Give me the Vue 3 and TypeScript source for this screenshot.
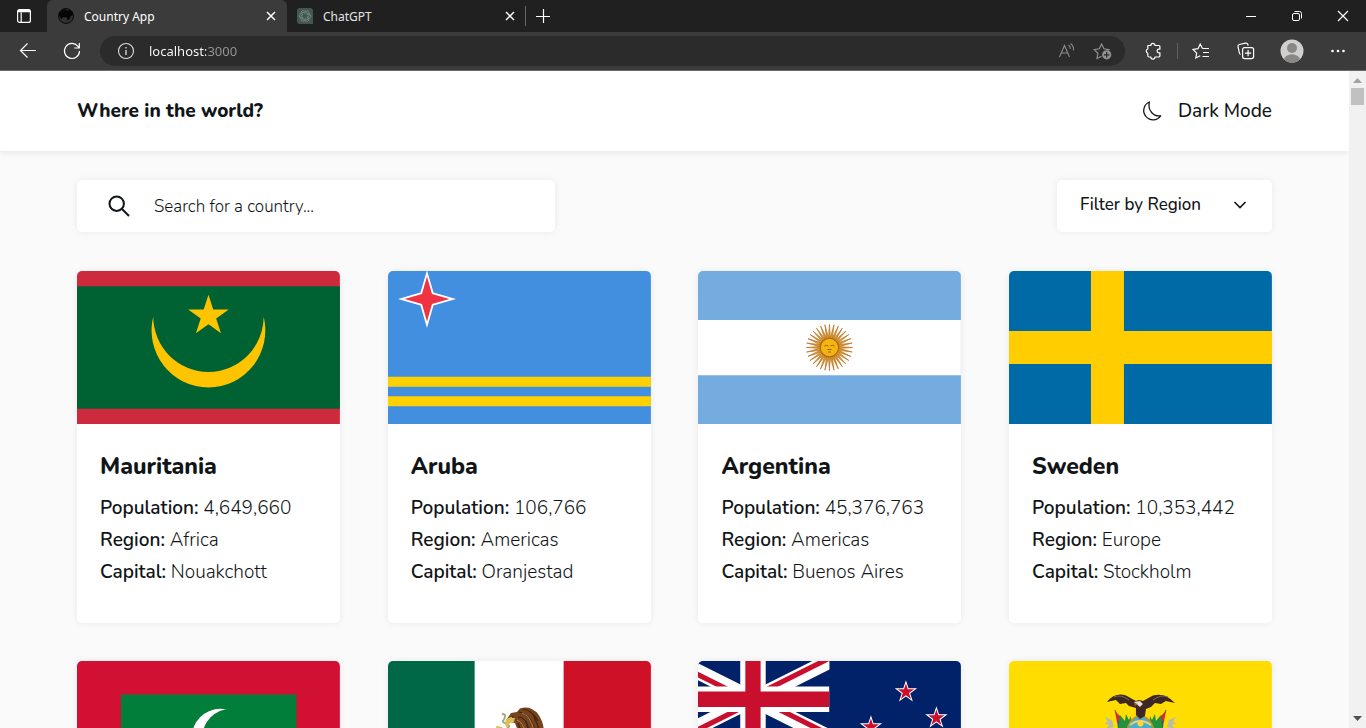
<script setup lang="ts">
import { computed, ref } from 'vue'

interface Country {
  name: string
  population: string
  region: string
  capital: string
}

const countries: Country[] = [
  { name: 'Mauritania', population: '4,649,660', region: 'Africa', capital: 'Nouakchott' },
  { name: 'Aruba', population: '106,766', region: 'Americas', capital: 'Oranjestad' },
  { name: 'Argentina', population: '45,376,763', region: 'Americas', capital: 'Buenos Aires' },
  { name: 'Sweden', population: '10,353,442', region: 'Europe', capital: 'Stockholm' },
  { name: 'Maldives', population: '540,542', region: 'Asia', capital: 'Malé' },
  { name: 'Mexico', population: '128,932,753', region: 'Americas', capital: 'Mexico City' },
  { name: 'New Zealand', population: '5,084,300', region: 'Oceania', capital: 'Wellington' },
  { name: 'Ecuador', population: '17,643,060', region: 'Americas', capital: 'Quito' },
]

const regions = ['Africa', 'Americas', 'Asia', 'Europe', 'Oceania']
const address = ref('localhost:3000')
const query = ref('')
const region = ref('')

const shown = computed(() =>
  countries.filter(
    (c) =>
      (!region.value || c.region === region.value) &&
      c.name.toLowerCase().includes(query.value.toLowerCase()),
  ),
)

function star(cx: number, cy: number, r: number): string {
  const pts: string[] = []
  for (let i = 0; i < 10; i++) {
    const radius = i % 2 ? r * 0.382 : r
    const a = (i * Math.PI) / 5 - Math.PI / 2
    pts.push(`${(cx + radius * Math.cos(a)).toFixed(2)},${(cy + radius * Math.sin(a)).toFixed(2)}`)
  }
  return pts.join(' ')
}

const nzStars = [
  [208, 31],
  [238.5, 57],
  [173, 66],
  [208, 121],
]
</script>

<template>
  <div class="window">
    <header class="chrome">
      <div class="titlebar">
        <button class="tab-menu" aria-label="Tab actions">
          <svg width="16" height="16" viewBox="0 0 16 16" fill="none" stroke="#fff" stroke-width="1.2">
            <rect x="1.6" y="1.6" width="12.8" height="12.8" rx="2" />
            <path d="M2 3.6h12M5.2 4.5v10" />
            <path d="M2 2.6h12" stroke-width="1.8" />
          </svg>
        </button>
        <div class="tab active">
          <svg class="favicon" width="16" height="16" viewBox="0 0 16 16">
            <circle cx="8" cy="8" r="7.5" fill="#303030" stroke="#0c0c0c" />
            <path d="M1 6Q2.500 1.500 7 1L9 2.500 12 2Q15 4.500 15 7L12.500 8.500 11.500 11 9.800 12.500 9 9.500 5.500 9 3.500 11Q1 9.500 1 6Z" fill="#050505" />
          </svg>
          <span class="tab-title">Country App</span>
          <button class="tab-close" aria-label="Close Country App">
            <svg width="10" height="10" viewBox="0 0 10 10" stroke="#fff" stroke-width="1.5"><path d="M1 1l8 8M9 1l-8 8" /></svg>
          </button>
        </div>
        <div class="tab">
          <svg class="favicon" width="16" height="16" viewBox="0 0 16 16">
            <path d="M3 0h10a3 3 0 0 1 3 3v13H3a3 3 0 0 1-3-3V3a3 3 0 0 1 3-3Z" fill="#41584f" />
            <g fill="none" stroke="#7c8a84" stroke-width=".8">
              <path v-for="n in 6" :key="n" d="M8 5.600V4.600Q8 2.600 9.800 2.600Q12 2.700 12 5V8.200L10.200 9.200" :transform="`rotate(${n * 60} 8 8)`" />
            </g>
          </svg>
          <span class="tab-title">ChatGPT</span>
          <button class="tab-close" aria-label="Close ChatGPT">
            <svg width="10" height="10" viewBox="0 0 10 10" stroke="#fff" stroke-width="1.5"><path d="M1 1l8 8M9 1l-8 8" /></svg>
          </button>
        </div>
        <span class="tab-divider"></span>
        <button class="new-tab" aria-label="New tab">
          <svg width="14" height="14" viewBox="0 0 14 14" stroke="#fff" stroke-width="1.2"><path d="M0 7.500h14M7.500 0v14" /></svg>
        </button>
        <div class="window-buttons">
          <button aria-label="Minimize">
            <svg width="12" height="12" viewBox="0 0 12 12" stroke="#fff"><path d="M1 6.500h10" /></svg>
          </button>
          <button aria-label="Restore">
            <svg width="12" height="12" viewBox="0 0 12 12" fill="none" stroke="#fff"><rect x="1.5" y="3.5" width="7" height="7" rx="1.5" /><path d="M3.500 1.500h5a2 2 0 0 1 2 2v5" /></svg>
          </button>
          <button aria-label="Close">
            <svg width="12" height="12" viewBox="0 0 12 12" stroke="#fff" stroke-width="1.2"><path d="M1 1l10 10M11 1L1 11" /></svg>
          </button>
        </div>
      </div>

      <div class="toolbar">
        <button class="nav" aria-label="Back">
          <svg width="18" height="18" viewBox="0 0 18 18" fill="none" stroke="#fff" stroke-width="1.2"><path d="M17 8.500H1.500M8.500 1.500l-7 7 7 7" /></svg>
        </button>
        <button class="nav" aria-label="Refresh">
          <svg width="18" height="18" viewBox="0 0 18 18" fill="none" stroke="#fff" stroke-width="1.2"><path d="M16.500 9A7.500 7.500 0 1 1 14.800 4.200L16 5.600M16.300 1v5h-5" /></svg>
        </button>
        <div class="address">
          <button class="icon" aria-label="Site information">
            <svg width="18" height="18" viewBox="0 0 18 18" fill="none" stroke="#ddd" stroke-width="1.1"><circle cx="9" cy="9" r="7.5" /><path d="M9 8v5M9 5v1.500" stroke-width="1.3" /></svg>
          </button>
          <input v-model="address" class="url" type="text" aria-label="Address" />
          <button class="icon" aria-label="Read aloud">
            <svg width="18" height="18" viewBox="0 0 18 18" fill="none" stroke="#8b8b8b" stroke-width="1.1"><path d="M2.500 15L7.500 3.500l5 11.500M4.200 11h6.600M11.500 3q2 1.500 1.800 4M13.500 1.500q3.500 2.500 3 7" /></svg>
          </button>
          <button class="icon" aria-label="Add to favorites">
            <svg width="19" height="18" viewBox="0 0 19 18" fill="none" stroke="#929292" stroke-width="1.2">
              <path d="M8.500 14.200L4 16.500l.9-5.200L1.200 7.600l5.100-.8L8.600 2 11 6.800l5 .8-1 1" />
              <circle cx="13.7" cy="12.8" r="4.6" fill="#929292" stroke="none" />
              <path d="M13.700 10v5.600M10.900 12.800h5.600" stroke="#2b2b2b" />
            </svg>
          </button>
        </div>
        <div class="tools">
          <button class="icon extensions" aria-label="Extensions">
            <svg width="18" height="18" viewBox="0 0 18 18" fill="none" stroke="#fff" stroke-width="1.2" stroke-linejoin="round">
              <path d="M3.800 3.500h3a2.100 2.100 0 0 1 4.200 0h3.700a1.200 1.200 0 0 1 1.200 1.200v2.500h-1a1.800 1.800 0 0 0 0 3.600h1v3a1.200 1.200 0 0 1-1.200 1.200H11a2.100 2.100 0 0 1-4.200 0H5a1.200 1.200 0 0 1-1.200-1.200v-2.600a2.200 2.200 0 0 1 0-4.200Z" />
            </svg>
          </button>
          <span class="tool-divider"></span>
          <button class="icon favorites" aria-label="Favorites">
            <svg width="18" height="18" viewBox="0 0 18 18" fill="none" stroke="#fff" stroke-width="1.2">
              <path d="M10.500 6.500L8.200 2 6 6.700l-5 .8 3.700 3.600L3.800 16l4.400-2.300M10.500 6.500H17M11 10.500h6M10.500 14.500H17" />
            </svg>
          </button>
          <button class="icon" aria-label="Collections">
            <svg width="18" height="18" viewBox="0 0 18 18" fill="none" stroke="#fff" stroke-width="1.2">
              <rect x="5.6" y="5.6" width="11" height="11" rx="2" />
              <path d="M11.100 8v6.200M8 11.100h6.200M3.600 12.500Q2.600 12 2.400 11L1 4.600Q.7 3 2.300 2.500L8.600 1.100q1.600-.3 2.200 1.200l.4 1.300" />
            </svg>
          </button>
          <button class="icon" aria-label="Profile">
            <svg width="24" height="24" viewBox="0 0 24 24">
              <defs><clipPath id="avatar"><circle cx="12" cy="12" r="11.5" /></clipPath></defs>
              <g clip-path="url(#avatar)"><rect width="24" height="24" fill="#d2d0ce" /><circle cx="12" cy="9" r="5" fill="#8a8886" /><ellipse cx="12" cy="21" rx="8" ry="5.8" fill="#8a8886" /></g>
            </svg>
          </button>
          <button class="icon" aria-label="Settings and more">
            <svg width="18" height="18" viewBox="0 0 18 18" fill="#fff"><circle cx="3.5" cy="9" r="1.3" /><circle cx="9" cy="9" r="1.3" /><circle cx="14.5" cy="9" r="1.3" /></svg>
          </button>
        </div>
      </div>
    </header>

    <div class="viewport">
      <div class="page">
        <header class="site-header">
          <h1>Where in the world?</h1>
          <button class="theme">
            <svg width="20" height="20" viewBox="0 0 20 20" fill="none" stroke="#111517" stroke-width="1.3" stroke-linejoin="round">
              <path d="M7.300 1A9.300 9.300 0 1 0 18.700 14.800C11.500 16 5.500 9.500 7.300 1Z" />
            </svg>
            Dark Mode
          </button>
        </header>

        <main>
          <div class="filters">
            <label class="search">
              <svg width="22" height="22" viewBox="0 0 22 22" fill="none" stroke="#111517" stroke-width="2">
                <circle cx="8.7" cy="8.7" r="7.2" /><path d="M14 14l7 7" />
              </svg>
              <input v-model="query" type="text" placeholder="Search for a country..." aria-label="Search for a country" />
            </label>
            <div class="region">
              <select v-model="region" aria-label="Filter by Region">
                <option value="">Filter by Region</option>
                <option v-for="r in regions" :key="r" :value="r">{{ r }}</option>
              </select>
              <svg width="14" height="10" viewBox="0 0 14 10" fill="none" stroke="#111517" stroke-width="1.6"><path d="M1.500 2L7 7.500 12.500 2" /></svg>
            </div>
          </div>

          <section class="grid">
            <article v-for="c in shown" :key="c.name" class="card">
              <svg v-if="c.name === 'Mauritania'" class="flag" viewBox="0 0 263 153" preserveAspectRatio="none" role="img" aria-label="Flag of Mauritania">
                <path fill="#cd2a3e" d="M0 0h263v153H0z" />
                <path fill="#006233" d="M0 15.300h263v122.400H0z" />
                <path fill="#ffc400" d="M76.300 45.700A56.900 56.900 0 1 0 186.700 45.700A55.200 55.200 0 0 1 76.300 45.700Z" />
                <polygon fill="#ffc400" :points="star(131.5, 45, 21.3)" />
              </svg>

              <svg v-else-if="c.name === 'Aruba'" class="flag" viewBox="0 0 263 153" preserveAspectRatio="none" role="img" aria-label="Flag of Aruba">
                <path fill="#418fde" d="M0 0h263v153H0z" />
                <path fill="#ffd100" d="M0 105.700h263v10H0zM0 125.200h263v10H0z" />
                <path fill="#fff" d="M39-.8L45.500 21.500 68 28l-22.500 6.500L39 57l-6.500-22.500L10 28l22.500-6.500Z" />
                <path fill="#ef3340" d="M39 5.500L44 23l17.500 5L44 33l-5 17.500L34 33l-17.500-5L34 23Z" />
              </svg>

              <svg v-else-if="c.name === 'Argentina'" class="flag" viewBox="0 0 263 153" preserveAspectRatio="none" role="img" aria-label="Flag of Argentina">
                <path fill="#74acdf" d="M0 0h263v153H0z" />
                <path fill="#fff" d="M0 49h263v55.300H0z" />
                <path v-for="n in 32" :key="n" d="M130.500 67L131.500 53.300 132.500 67Z" fill="#e09a20" stroke="#b9772b" stroke-width=".7" :transform="`rotate(${n * 11.25} 131.5 76.5)`" />
                <circle cx="131.5" cy="76.5" r="9.2" fill="#f6b40e" stroke="#a8661a" stroke-width="1.1" />
                <path d="M126.500 75q2-1.500 4 0M132.500 75q2-1.500 4 0M129.500 78.500h4M130 81h3" stroke="#9a6018" stroke-width="1" fill="none" />
              </svg>

              <svg v-else-if="c.name === 'Sweden'" class="flag" viewBox="0 0 263 153" preserveAspectRatio="none" role="img" aria-label="Flag of Sweden">
                <path fill="#006aa7" d="M0 0h263v153H0z" />
                <path fill="#ffcd00" d="M82 0h33v153H82zM0 60h264v33H0z" />
              </svg>

              <svg v-else-if="c.name === 'Maldives'" class="flag" viewBox="0 0 263 153" preserveAspectRatio="none" role="img" aria-label="Flag of Maldives">
                <path fill="#d21034" d="M0 0h263v153H0z" />
                <path fill="#007e3a" d="M44 33.500h175.500v86H44z" />
                <circle cx="143.5" cy="76.5" r="28.7" fill="#fff" />
                <circle cx="154" cy="76.5" r="28.7" fill="#007e3a" />
              </svg>

              <svg v-else-if="c.name === 'Mexico'" class="flag" viewBox="0 0 263 153" preserveAspectRatio="none" role="img" aria-label="Flag of Mexico">
                <path fill="#006847" d="M0 0h87v153H0z" />
                <path fill="#fff" d="M86.700 0h89.300v153H86.700z" />
                <path fill="#ce1126" d="M175.700 0H263v153h-87.300z" />
                <path d="M114 53q4 0 3 3t-2 4 4 3-1 5" fill="none" stroke="#9eac78" stroke-width="1.8" />
                <path d="M119 58L123 52 129 51 132 47.500Q141 44 149 51.500 155 59 156 69L154 86H126L129 67 127 62 122 61Z" fill="#76431d" />
                <path d="M131 51q6 1 10 6t8 16M130 56q8 0 11 13M135 48q9 1 15 12M130 62l5 13M138 60l4 14M145 53l7 17" fill="none" stroke="#3d2415" stroke-width="1.2" />
                <path d="M134 52q8 2 12 17M129 59q6 2 9 14" fill="none" stroke="#b7824b" stroke-width="1" />
                <path d="M118 58l5-2 4 1-1 4-4 1-3 5-2-4ZM108 65l6 1 3 4-4 3-4-2Z" fill="#dfbc54" />
                <path d="M124 56h2" stroke="#2c1a10" />
              </svg>

              <svg v-else-if="c.name === 'New Zealand'" class="flag" viewBox="0 0 263 153" preserveAspectRatio="none" role="img" aria-label="Flag of New Zealand">
                <defs>
                  <clipPath id="canton"><path d="M0 0h60v30H0z" /></clipPath>
                  <clipPath id="saltire"><path d="M30 15h30v15zv15H0zH0V0zV0h30z" /></clipPath>
                </defs>
                <path fill="#012169" d="M0 0h263v153H0z" />
                <g transform="translate(-21.5) scale(2.55)">
                  <g clip-path="url(#canton)">
                    <path d="M0 0l60 30M60 0L0 30" stroke="#fff" stroke-width="6" />
                    <path d="M0 0l60 30M60 0L0 30" stroke="#c8102e" stroke-width="4" clip-path="url(#saltire)" />
                    <path d="M30 0v30M0 15h60" stroke="#fff" stroke-width="10" />
                    <path d="M30 0v30M0 15h60" stroke="#c8102e" stroke-width="6" />
                  </g>
                </g>
                <g v-for="([x, y], i) in nzStars" :key="i">
                  <polygon :points="star(x, y, 11.8)" fill="#fff" />
                  <polygon :points="star(x, y, 8.6)" fill="#c8102e" />
                </g>
              </svg>

              <svg v-else class="flag" viewBox="0 0 263 153" preserveAspectRatio="none" role="img" aria-label="Flag of Ecuador">
                <path fill="#ffdd00" d="M0 0h263v77H0z" />
                <path fill="#034ea2" d="M0 76.500h263v38.300H0z" />
                <path fill="#ed1c24" d="M0 114.800h263V153H0z" />
                <path d="M106 49L114 70M157 49L149 70" stroke="#8b6a35" stroke-width="1.2" />
                <path d="M106 50l5 5 1 10-4-4ZM157 50l-5 5-1 10 4-4Z" fill="#d52b34" />
                <path d="M108 59l5 4 1 7-5-3ZM155 59l-5 4-1 7 5-3Z" fill="#2d55a0" />
                <path d="M103 59l-7-3 3 5-4 1 5 2-3 4 8-2ZM160 59l7-3-3 5 4 1-5 2 3 4-8-2Z" fill="#b9bda8" />
                <path d="M111 54l5 6 1-7 3 6 2-4 1 16h-14ZM152 54l-5 6-1-7-3 6-2-4-1 16h14Z" fill="#24913d" />
                <ellipse cx="131.5" cy="76" rx="15" ry="22" fill="#bd9138" />
                <ellipse cx="131.5" cy="76" rx="13" ry="20" fill="#48aeca" />
                <path d="M121 64q10-8 21 0" fill="none" stroke="#e7d17d" stroke-width="2" />
                <circle cx="131.5" cy="62.5" r="3" fill="#ffd735" />
                <path d="M98 41Q106 31 117 34.500L127 40 130 39 134 40 144 34.500Q156 31 166 42L157 40 152 43 146 42 142 46 137 48 136 55 131 58 127 54 127 47 120 45 117 42 111 43 107 39Z" fill="#3d2723" />
                <path d="M105 36q7-3 15 3M159 36q-7-3-15 3" fill="none" stroke="#776962" stroke-width="1" />
                <path d="M125 41l6-1 3 3-3 3Z" fill="#e7e0d2" />
                <path d="M125 42l4 1-3 2Z" fill="#cd4636" />
              </svg>

              <div class="info">
                <h2>{{ c.name }}</h2>
                <p><b>Population:</b> {{ c.population }}</p>
                <p><b>Region:</b> {{ c.region }}</p>
                <p><b>Capital:</b> {{ c.capital }}</p>
              </div>
            </article>
          </section>
        </main>
      </div>

      <div class="scrollbar" aria-hidden="true">
        <svg width="9" height="5" viewBox="0 0 9 5"><path d="M0 5l4.500-5L9 5z" fill="#a3a3a3" /></svg>
        <span class="thumb"></span>
        <svg width="9" height="5" viewBox="0 0 9 5"><path d="M0 0h9L4.500 5z" fill="#505050" /></svg>
      </div>
    </div>
  </div>
</template>

<style>
body {
  margin: 0;
  overflow: hidden;
}
</style>

<style scoped>
* {
  box-sizing: border-box;
}

.window {
  display: flex;
  flex-direction: column;
  height: 100vh;
  overflow: hidden;
  color: #111517;
  font-family: Nunito, "Open Sans", sans-serif;
}

svg {
  display: block;
  flex: none;
}

button {
  display: flex;
  align-items: center;
  justify-content: center;
  flex: none;
  padding: 0;
  border: 0;
  background: none;
  color: inherit;
  font: inherit;
}

input,
select {
  min-width: 0;
  padding: 0;
  border: 0;
  outline: 0;
  background: none;
  color: inherit;
  font: inherit;
}

h1,
h2,
p {
  margin: 0;
}

.chrome {
  flex: none;
  border-bottom: 1px solid #6b6b6b;
  background: #3b3b3b;
  color: #fff;
  font-family: "Segoe UI", "Noto Sans", sans-serif;
}

.titlebar {
  display: flex;
  align-items: center;
  height: 32px;
  background: #202020;
}

.tab-menu {
  width: 47px;
  height: 32px;
}

.tab {
  display: flex;
  align-items: center;
  width: 240px;
  height: 32px;
  padding: 0 11px;
  color: #e4e4e4;
  font-size: 12px;
}

.tab:not(.active) {
  width: 238px;
  padding: 0 10px;
}

.tab.active {
  border-radius: 6px 6px 0 0;
  background: #3b3b3b;
  color: #fff;
}

.tab-title {
  flex: 1;
  margin-left: 10px;
}

.tab-close {
  width: 10px;
  height: 32px;
}

.tab-divider {
  width: 1px;
  height: 20px;
  background: #686868;
}

.new-tab {
  width: 34px;
  height: 32px;
}

.window-buttons {
  display: flex;
  margin-left: auto;
}

.window-buttons button {
  width: 46px;
  height: 32px;
}

.toolbar {
  display: flex;
  align-items: center;
  height: 38px;
  padding: 0 5px 0 6px;
}

.nav {
  width: 44px;
  height: 36px;
}

.address {
  display: flex;
  flex: 1;
  align-items: center;
  gap: 18px;
  height: 30px;
  margin-left: 6px;
  padding: 0 13px 0 17px;
  border-radius: 15px;
  background: #2b2b2b;
}

.url {
  flex: 1;
  height: 20px;
  margin-left: -4px;
  background: linear-gradient(to right, #fff 57px, #979797 57px);
  background-clip: text;
  -webkit-text-fill-color: transparent;
  font-size: 13px;
}

.tools {
  display: flex;
  align-items: center;
}

.tools .icon {
  width: 46px;
  height: 30px;
}

.tools .extensions {
  width: 52px;
  padding-left: 4px;
}

.tools .favorites {
  width: 44px;
}

.tool-divider {
  width: 1px;
  height: 16px;
  margin-right: 1px;
  background: #606060;
}

.viewport {
  display: flex;
  flex: 1;
  min-height: 0;
}

.page {
  flex: 1;
  overflow-y: auto;
  background: #fafafa;
  scrollbar-width: none;
}

.site-header {
  display: flex;
  align-items: center;
  justify-content: space-between;
  height: 80px;
  padding: 0 77px;
  background: #fff;
  box-shadow: 0 2px 6px rgba(0, 0, 0, 0.08);
}

h1 {
  font-size: 19px;
  font-weight: 800;
}

.theme {
  gap: 16px;
  font-size: 19px;
  font-weight: 500;
}

main {
  padding: 29px 77px 38px;
}

.filters {
  display: flex;
  justify-content: space-between;
  margin-bottom: 39px;
}

.search,
.region,
.card {
  border-radius: 5px;
  background: #fff;
  box-shadow: 0 0 7px rgba(0, 0, 0, 0.07);
}

.search {
  display: flex;
  align-items: center;
  width: 40%;
  height: 52px;
  padding: 0 31px;
}

.search input {
  flex: 1;
  height: 28px;
  margin-left: 24px;
  font-size: 17px;
  font-weight: 300;
}

.search input::placeholder {
  color: #111517;
  opacity: 1;
}

.region {
  display: grid;
  align-items: center;
  width: 18%;
}

.region > * {
  grid-area: 1 / 1;
}

.region select {
  height: 52px;
  padding: 0 48px 3px 23px;
  appearance: none;
  font-size: 17px;
  font-weight: 500;
}

.region svg {
  justify-self: end;
  margin-right: 25px;
  margin-bottom: 2px;
  pointer-events: none;
}

.grid {
  display: grid;
  grid-template-columns: repeat(4, 22%);
  justify-content: space-between;
  row-gap: 38px;
}

.card {
  overflow: hidden;
}

.flag {
  width: 100%;
  height: 153px;
}

.info {
  padding: 28px 23px 35px;
}

h2 {
  margin-bottom: 10px;
  font-size: 23px;
  font-weight: 800;
  line-height: 30px;
}

.info p {
  font-size: 19px;
  font-weight: 300;
  line-height: 32px;
  white-space: nowrap;
}

.info b {
  font-weight: 600;
}

.scrollbar {
  display: flex;
  flex-direction: column;
  align-items: center;
  width: 17px;
  padding: 7px 0;
  background: #f1f1f1;
}

.thumb {
  width: 13px;
  height: 17px;
  margin: 5px 0 auto;
  background: #c1c1c1;
}
</style>
